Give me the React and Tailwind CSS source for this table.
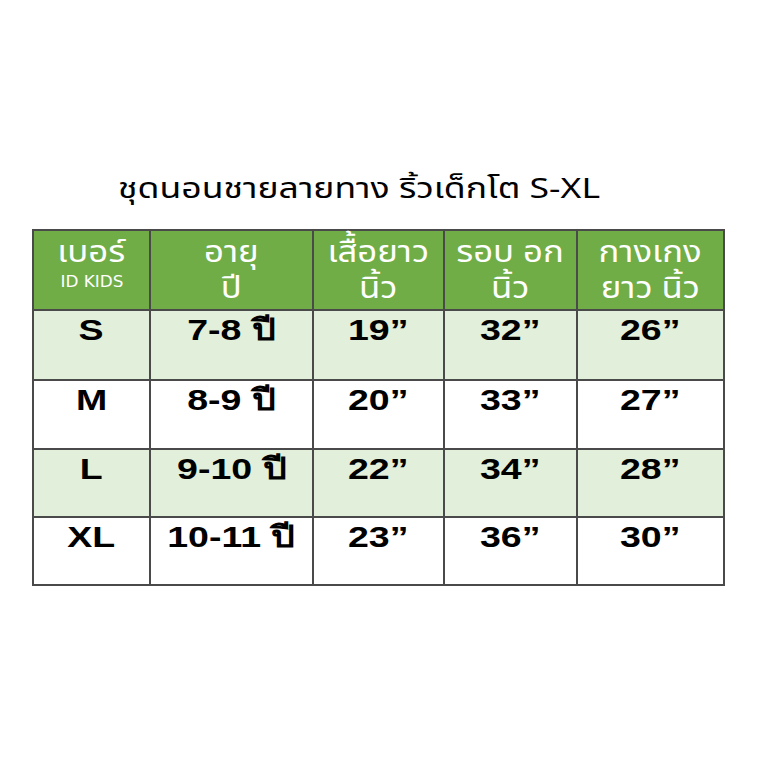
import React from "react";

const rows = [
  ["S", "7-8 ปี", "19”", "32”", "26”", true],
  ["M", "8-9 ปี", "20”", "33”", "27”", false],
  ["L", "9-10 ปี", "22”", "34”", "28”", true],
  ["XL", "10-11 ปี", "23”", "36”", "30”", false],
];

const thaiFont = "font-['Tahoma','Noto_Sans_Thai','Noto_Sans','DejaVu_Sans',sans-serif]";

function HeadCell({ l1, l2, small }) {
  return (
    <th className={`border-2 border-[#4a4a4a] align-top pt-[4px] font-normal ${thaiFont}`}>
      <div className="text-[31px] leading-[36px]">
        <span className="inline-block scale-x-[1.12]">{l1}</span>
      </div>
      {small ? (
        <div className="text-[16px] leading-[22px] font-['DejaVu_Sans','Tahoma',sans-serif]">
          <span className="inline-block scale-x-[1.05]">{l2}</span>
        </div>
      ) : (
        <div className="text-[31px] leading-[36px]">
          <span className="inline-block scale-x-[1.12]">{l2}</span>
        </div>
      )}
    </th>
  );
}

export default function App() {
  return (
    <div className="w-[759px] h-[759px] bg-white relative">
      <div className="pt-[170px] pl-[118px]">
        <h1 className={`text-[28px] leading-[40px] text-black font-normal ${thaiFont}`}>
          <span className="inline-block origin-left scale-x-[1.27] whitespace-nowrap">ชุดนอนชายลายทาง ริ้วเด็กโต S-XL</span>
        </h1>
      </div>
      <div className="pl-[32px] pt-[19px]">
        <table className="border-collapse table-fixed w-[691px] text-white">
          <colgroup>
            <col className="w-[117px]" />
            <col className="w-[163px]" />
            <col className="w-[131px]" />
            <col className="w-[133px]" />
            <col className="w-[147px]" />
          </colgroup>
          <thead>
            <tr className="h-[80px] bg-[#70ad47]">
              <HeadCell l1="เบอร์" l2="ID KIDS" small />
              <HeadCell l1="อายุ" l2="ปี" />
              <HeadCell l1="เสื้อยาว" l2="นิ้ว" />
              <HeadCell l1="รอบ อก" l2="นิ้ว" />
              <HeadCell l1="กางเกง" l2="ยาว นิ้ว" />
            </tr>
          </thead>
          <tbody>
            {rows.map((r, i) => (
              <tr key={i} className={`${i === 0 ? "h-[70px]" : i === 1 ? "h-[69px]" : "h-[68px]"} ${r[5] ? "bg-[#e2efda]" : "bg-white"}`}>
                {r.slice(0, 5).map((c, j) => (
                  <td
                    key={j}
                    className="border-2 border-[#4a4a4a] align-top pt-[2px] text-center text-black font-bold text-[30px] leading-[34px] font-['Liberation_Sans','Tahoma',sans-serif]"
                  >
                    <span className="inline-block scale-x-[1.25] whitespace-nowrap">{c}</span>
                  </td>
                ))}
              </tr>
            ))}
          </tbody>
        </table>
      </div>
    </div>
  );
}
